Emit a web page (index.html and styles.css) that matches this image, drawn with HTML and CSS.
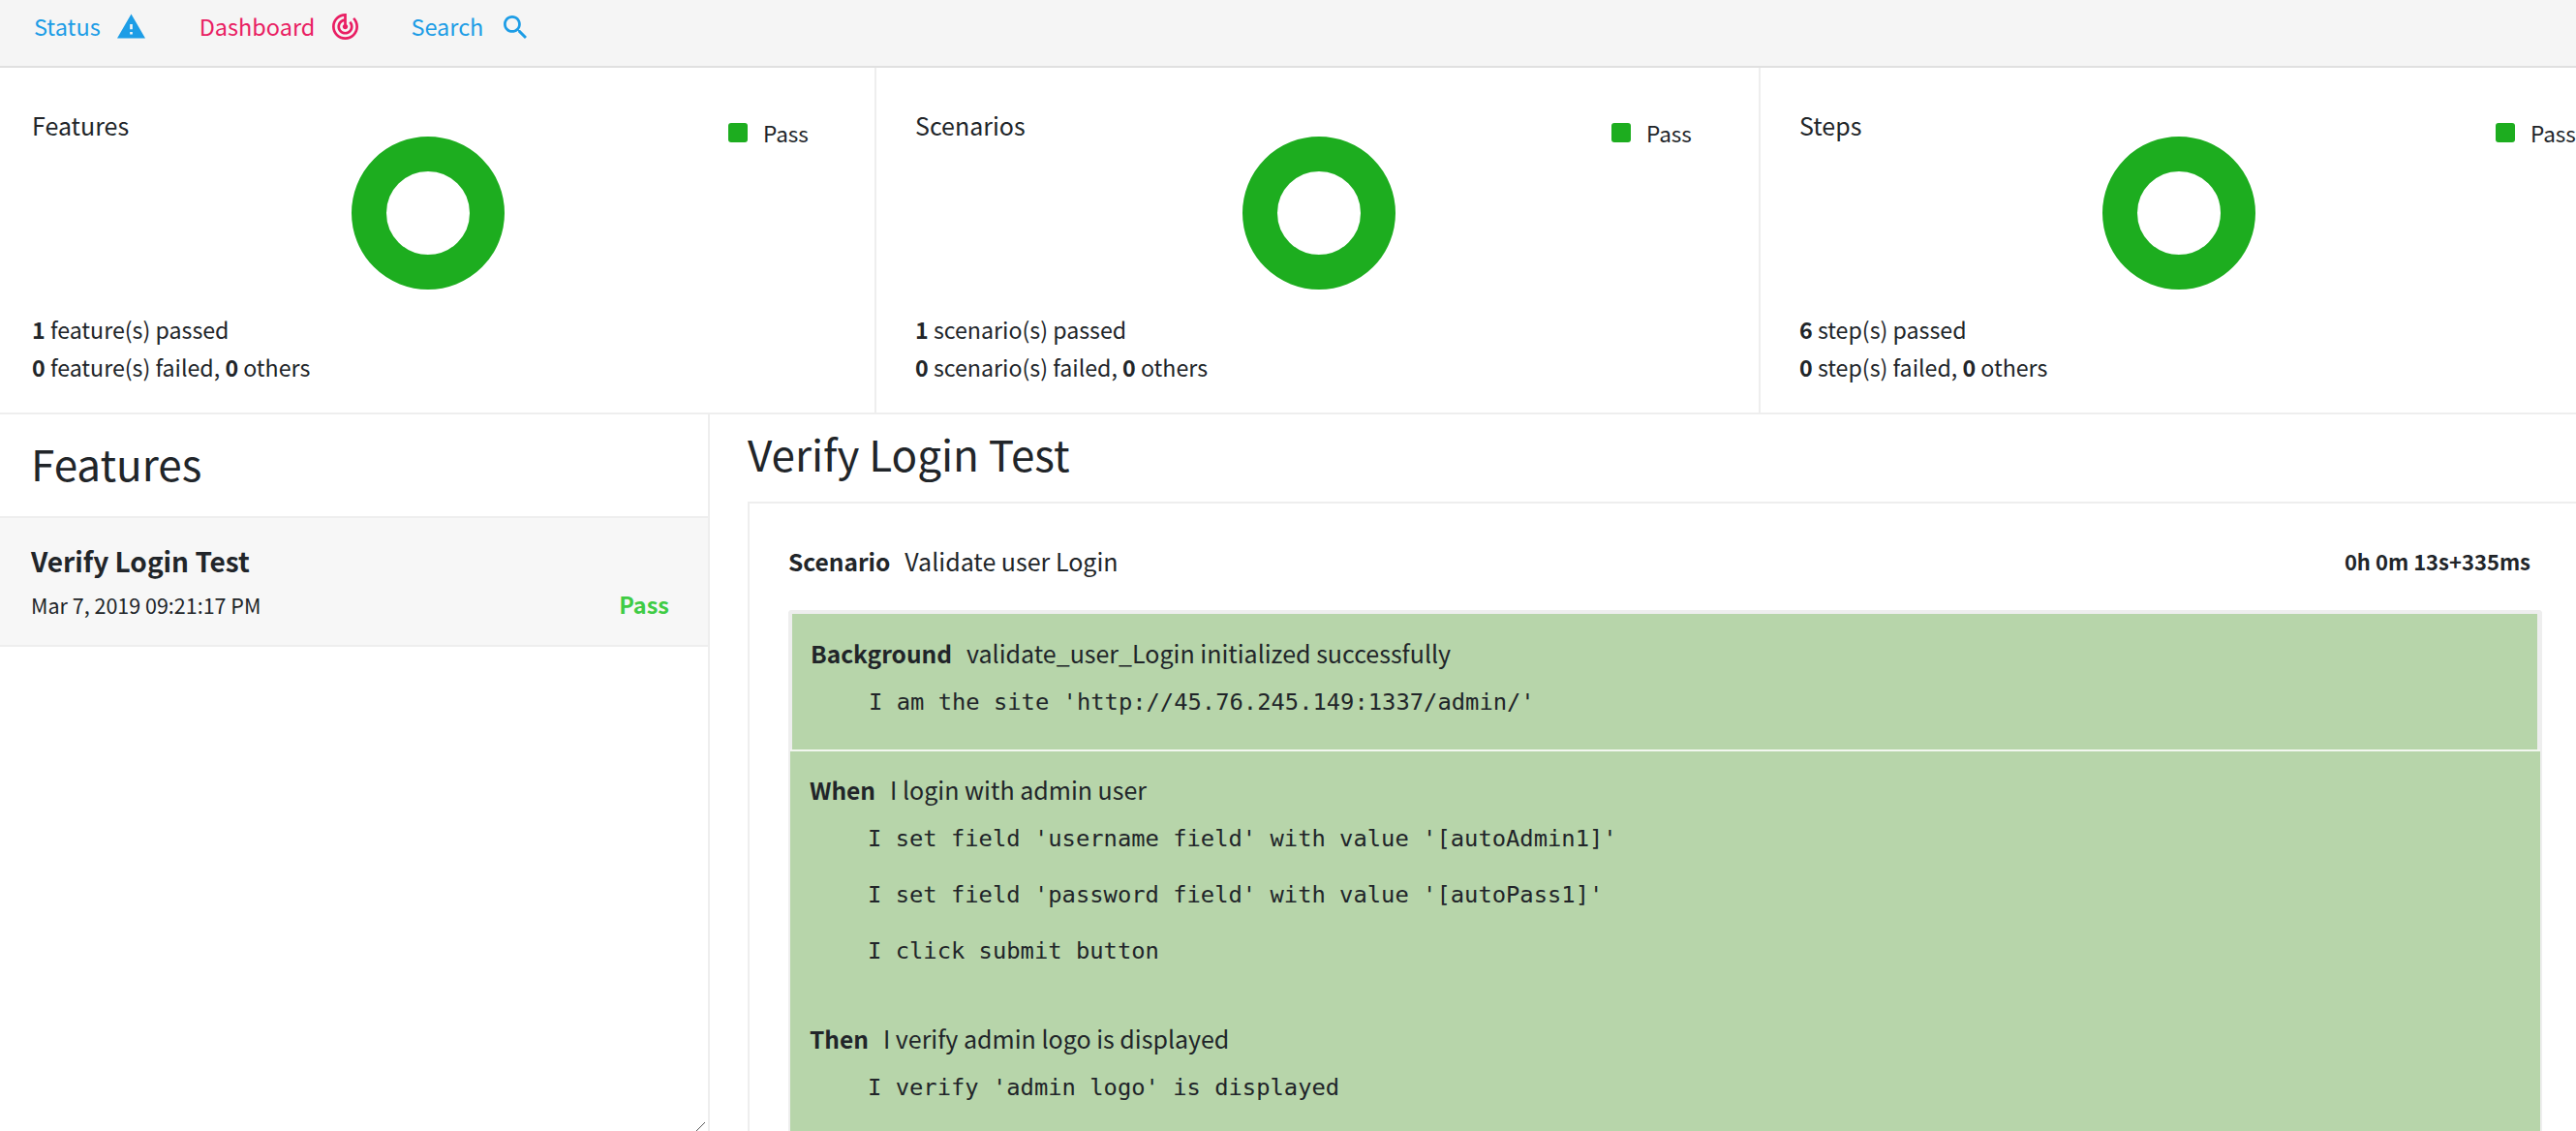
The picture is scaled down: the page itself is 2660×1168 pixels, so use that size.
FILE: index.html
```html
<!DOCTYPE html>
<html>
    <head>
        <meta charset="utf-8">
        <title>Extent Report</title>
        <link rel="stylesheet" href="styles.css">
    </head>
    <body>
        <nav class="topbar">
            <a class="nav-link nav-status" href="#">Status
                <svg class="nav-icon icon-status" viewBox="1 2 22 19"><path d="M1 21h22L12 2 1 21zm12-3h-2v-2h2v2zm0-4h-2v-4h2v4z"/></svg>
            </a>
            <a class="nav-link nav-dash" href="#">Dashboard
                <svg class="nav-icon icon-dash" viewBox="2 2 20 20"><path d="M19.07 4.93l-1.41 1.41C19.1 7.79 20 9.79 20 12c0 4.42-3.58 8-8 8s-8-3.58-8-8c0-4.08 3.05-7.44 7-7.93v2.02C8.16 6.57 6 9.03 6 12c0 3.31 2.69 6 6 6s6-2.69 6-6c0-1.66-.67-3.16-1.76-4.24l-1.41 1.41C15.55 9.9 16 10.9 16 12c0 2.21-1.79 4-4 4s-4-1.79-4-4c0-1.86 1.28-3.41 3-3.86v2.14c-.6.35-1 .98-1 1.72 0 1.1.9 2 2 2s2-.9 2-2c0-.74-.4-1.38-1-1.72V2h-1C6.48 2 2 6.48 2 12s4.48 10 10 10 10-4.48 10-10c0-2.76-1.12-5.26-2.93-7.07z"/></svg>
            </a>
            <a class="nav-link nav-search" href="#">Search
                <svg class="nav-icon icon-search" viewBox="3 3 17.5 17.5"><path d="M15.5 14h-.79l-.28-.27C15.41 12.59 16 11.11 16 9.5 16 5.91 13.09 3 9.5 3S3 5.91 3 9.5 5.91 16 9.5 16c1.61 0 3.09-.59 4.23-1.57l.27.28v.79l5 4.99L20.49 19l-4.99-5zm-6 0C7.01 14 5 11.99 5 9.5S7.01 5 9.5 5 14 7.01 14 9.5 11.99 14 9.5 14z"/></svg>
            </a>
        </nav>

        <section class="summary">
            <div class="card card-features">
                <div class="card-top">
                    <h4 class="card-title">Features</h4>
                    <div class="chart">
                        <svg class="donut" viewBox="0 0 158 158"><circle cx="79" cy="79" r="61" /></svg>
                        <div class="legend"><i class="legend-dot"></i>Pass</div>
                    </div>
                </div>
                <p class="stat"><b>1</b> feature(s) passed</p>
                <p class="stat"><b>0</b> feature(s) failed, <b>0</b> others</p>
            </div>
            <div class="card card-scenarios">
                <div class="card-top">
                    <h4 class="card-title">Scenarios</h4>
                    <div class="chart">
                        <svg class="donut" viewBox="0 0 158 158"><circle cx="79" cy="79" r="61" /></svg>
                        <div class="legend"><i class="legend-dot"></i>Pass</div>
                    </div>
                </div>
                <p class="stat"><b>1</b> scenario(s) passed</p>
                <p class="stat"><b>0</b> scenario(s) failed, <b>0</b> others</p>
            </div>
            <div class="card card-steps">
                <div class="card-top">
                    <h4 class="card-title">Steps</h4>
                    <div class="chart">
                        <svg class="donut" viewBox="0 0 158 158"><circle cx="79" cy="79" r="61" /></svg>
                        <div class="legend"><i class="legend-dot"></i>Pass</div>
                    </div>
                </div>
                <p class="stat"><b>6</b> step(s) passed</p>
                <p class="stat"><b>0</b> step(s) failed, <b>0</b> others</p>
            </div>
        </section>

        <div class="split">
            <aside class="features">
                <h3 class="features-head">Features</h3>
                <div class="feature-item">
                    <div class="feature-name">Verify Login Test</div>
                    <div class="feature-meta">
                        <span class="feature-date">Mar 7, 2019 09:21:17 PM</span>
                        <span class="feature-pass">Pass</span>
                    </div>
                </div>
                <svg class="resize-grip" viewBox="0 0 9 9"><path d="M0 9L9 0"/></svg>
            </aside>
            <main class="detail">
                <h2 class="detail-title">Verify Login Test</h2>
                <div class="detail-box">
                    <div class="scenario-head">
                        <div class="scenario-name"><b>Scenario</b>Validate user Login</div>
                        <div class="scenario-time">0h 0m 13s+335ms</div>
                    </div>
                    <div class="steps">
                        <div class="step-bg">
                            <div class="step-line"><b>Background</b>validate_user_Login initialized successfully</div>
                            <div class="step-code">I am the site 'http://45.76.245.149:1337/admin/'</div>
                        </div>
                        <div class="step-when">
                            <div class="step-line"><b>When</b>I login with admin user</div>
                            <div class="step-code">I set field 'username field' with value '[autoAdmin1]'</div>
                            <div class="step-code">I set field 'password field' with value '[autoPass1]'</div>
                            <div class="step-code">I click submit button</div>
                            <div class="step-line step-then"><b>Then</b>I verify admin logo is displayed</div>
                            <div class="step-code">I verify 'admin logo' is displayed</div>
                        </div>
                    </div>
                </div>
            </main>
        </div>
    </body>
</html>
```

FILE: styles.css
```css
html, body{margin:0; padding:0; height:1168px; overflow:hidden; background:#fff}
body{font-family:"Noto Sans CJK SC", "Noto Sans", sans-serif; font-size:23.2px; color:#212529; width:2660px}
b{font-weight:700}
h2, h3, h4, p{margin:0; font-weight:400}

.topbar{display:flex; height:68px; background:#f5f5f5; border-bottom:2px solid #e0e0e0; padding-left:35px}
.nav-link{display:flex; align-items:flex-start; height:54px; line-height:54px; text-decoration:none; font-size:23.5px; color:#1d9de6}
.nav-dash{color:#e91e63; margin-left:56px}
.nav-search{margin-left:54px}
.nav-icon{fill:currentColor; margin-top:14px; margin-left:17px}
.icon-status{width:29px; height:26px}
.icon-dash{width:27px; height:27px; margin-left:18px}
.icon-search{width:24px; height:24px; margin-top:16px; margin-left:21px}

.summary{display:flex; height:356px; border-bottom:2px solid #eee}
.card{flex:none; padding-left:40px; padding-top:39px; box-sizing:border-box; border-right:2px solid #eee}
.card-features{width:905px; padding-left:33px}
.card-scenarios{width:913px}
.card-steps{width:913px; border-right:0}
.card-top{display:grid; height:204px; margin-bottom:8px}
.card-title, .chart{grid-area:1 / 1}
.card-title{font-size:25px; line-height:40px}
.chart{display:flex; align-items:flex-start}
.donut{flex:none; width:158px; height:158px; margin-top:32px; fill:none; stroke:#1dad1f; stroke-width:36}
.card-features .donut{margin-left:330px}
.card-scenarios .donut{margin-left:338px}
.card-steps .donut{margin-left:313px}
.card-features .legend{margin-left:231px}
.card-scenarios .legend{margin-left:223px}
.card-steps .legend{margin-left:248px}
.legend{display:flex; align-items:center; font-size:22.5px; line-height:30px; margin-top:13px; white-space:nowrap}
.legend-dot{width:20px; height:20px; border-radius:3px; background:#1dad1f; margin-right:16px}
.stat{line-height:38.5px; white-space:nowrap}

.split{display:flex; height:740px}
.features{position:relative; flex:none; width:731px; height:740px; border-right:2px solid #eee}
.features-head{font-size:44px; line-height:100px; height:105px; padding-left:32px; border-bottom:2px solid #eee}
.feature-item{height:133px; padding:26px 40px 0 32px; box-sizing:border-box; background:#f7f7f7; border-bottom:2px solid #eee}
.feature-name{font-size:28px; font-weight:700; line-height:36px}
.feature-meta{display:flex; justify-content:space-between; align-items:center; line-height:28px; margin-top:14px}
.feature-date{font-size:21.5px}
.feature-pass{font-size:23.5px; font-weight:700; color:#3fcc45; margin-top:-3px}
.resize-grip{position:absolute; right:3px; bottom:0; width:9px; height:9px; stroke:#555; stroke-width:1; fill:none}

.detail{flex:1; min-width:0; padding-left:39px}
.detail-title{font-size:44px; line-height:66px; height:90px; padding-top:7px; box-sizing:border-box}
.detail-box{height:660px; padding:0 0 0 40px; border:2px solid #eee; border-right:0}
.scenario-head{display:flex; justify-content:space-between; align-items:center; width:1799px; height:110px; padding-top:8px; box-sizing:border-box}
.scenario-name{font-size:25px}
.scenario-name b{margin-right:15px; font-size:24.5px}
.scenario-time{font-size:22px; font-weight:700}

.steps{width:1811px; box-sizing:border-box; border:4px solid #eee; border-bottom:0; border-radius:4px 4px 0 0; background:#b7d5aa}
.step-bg{height:140px; padding:19.5px 0 0 20px; box-sizing:border-box; margin-left:-1px; border-right:1px solid #eee}
.step-when{margin:2px -2px 0 -2px; padding:19px 0 60px 20px; background:#b7d5aa; box-shadow:0 -2px 0 #f2f7ef}
.step-line{line-height:40px; font-size:25px; white-space:nowrap; margin-bottom:1px}
.step-line b{margin-right:15px; font-size:24.5px}
.step-code{font-family:"DejaVu Sans Mono", monospace; font-size:23.8px; line-height:58px; padding-left:60px; white-space:pre}
.step-then{margin-top:41px}
```
